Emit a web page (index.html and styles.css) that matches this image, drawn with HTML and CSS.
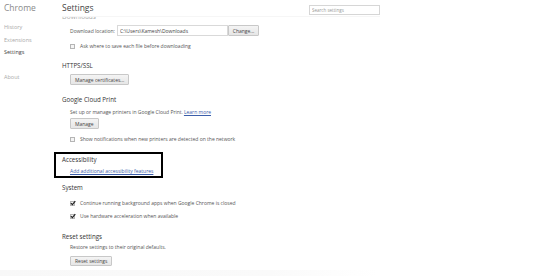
FILE: index.html
```html
<!DOCTYPE html>
<html>
<head>
    <title>Settings</title>
    <link rel="stylesheet" href="styles.css">
</head>
<body>
    <div class="page">
        <div class="sidebar">
            <div class="brand">Chrome</div>
            <ul class="nav">
                <li>History</li>
                <li>Extensions</li>
                <li class="selected">Settings</li>
                <li class="nav-about">About</li>
            </ul>
        </div>
        <div class="main">
            <div class="header">
                <h1>Settings</h1>
                <input type="text" class="search" placeholder="Search settings">
            </div>
            <div class="content">
                <div class="cut-title"><span>Downloads</span></div>
                <div class="row download-row">
                    <span class="label">Download location:</span>
                    <input type="text" class="path" value="C:\Users\Kamesh\Downloads">
                    <button>Change...</button>
                </div>
                <div class="row check-row">
                    <span class="box"></span>
                    <span>Ask where to save each file before downloading</span>
                </div>

                <h3 class="section-title https-title">HTTPS/SSL</h3>
                <div class="row btn-row">
                    <button>Manage certificates...</button>
                </div>

                <h3 class="section-title gcp-title">Google Cloud Print</h3>
                <div class="row text-row">
                    Set up or manage printers in Google Cloud Print. <a href="#">Learn more</a>
                </div>
                <div class="row btn-row manage-row">
                    <button>Manage</button>
                </div>
                <div class="row check-row notif-row">
                    <span class="box"></span>
                    <span>Show notifications when new printers are detected on the network</span>
                </div>

                <div class="highlight">
                    <h3 class="section-title">Accessibility</h3>
                    <div class="row text-row">
                        <a href="#">Add additional accessibility features</a>
                    </div>
                </div>

                <h3 class="section-title system-title">System</h3>
                <div class="row check-row sys-row">
                    <span class="box checked"><svg viewBox="0 0 10 10"><path d="M1.5 5.2 L4 7.8 L8.8 1.8" /></svg></span>
                    <span>Continue running background apps when Google Chrome is closed</span>
                </div>
                <div class="row check-row sys-row2">
                    <span class="box checked"><svg viewBox="0 0 10 10"><path d="M1.5 5.2 L4 7.8 L8.8 1.8" /></svg></span>
                    <span>Use hardware acceleration when available</span>
                </div>

                <h3 class="section-title reset-title">Reset settings</h3>
                <div class="row text-row restore-row">Restore settings to their original defaults.</div>
                <div class="row btn-row reset-btn-row">
                    <button>Reset settings</button>
                </div>
            </div>
        </div>
    </div>
    <div class="fade"></div>
</body>
</html>
```

FILE: styles.css
```css
body {
    margin: 0;
    font-family: "Open Sans", "Liberation Sans", sans-serif;
    background-color: #fff;
    color: #555;
    overflow: hidden;
}
.page {
    display: flex;
    height: 270px;
    overflow: hidden;
}
.fade {
    height: 6px;
    background: linear-gradient(90deg, #f8f8f8, #fafafa 50%, #fff 70%);
}
.sidebar {
    width: 50px;
    padding-left: 4px;
    flex-shrink: 0;
}
.brand {
    font-size: 8.5px;
    line-height: 16px;
    color: #8a8a8a;
}
.nav {
    list-style-type: none;
    margin: 5px 0 0 0;
    padding: 0;
    font-size: 5.5px;
    color: #aaa;
}
.nav li {
    height: 12.5px;
    line-height: 12.5px;
}
.nav .selected {
    color: #444;
}
.nav .nav-about {
    margin-top: 12px;
}
.main {
    flex: 1;
    padding-left: 8px;
}
.header {
    width: 318px;
    height: 16px;
    display: flex;
    justify-content: space-between;
    border-bottom: 1px solid #f6f6f6;
}
.header h1 {
    margin: 0;
    font-size: 8.5px;
    font-weight: normal;
    line-height: 16px;
    color: #444;
}
.search {
    margin-top: 5px;
    width: 71px;
    height: 10px;
    box-sizing: border-box;
    border: 1px solid #d6d6d6;
    padding: 0 2px;
    font-family: inherit;
    font-size: 4.5px;
    color: #555;
}
.search::placeholder {
    color: #999;
}
.cut-title {
    height: 3px;
    overflow: hidden;
    font-size: 6.5px;
    color: #aaa;
}
.cut-title span {
    display: block;
    height: 3px;
    line-height: 0;
}
.section-title {
    margin: 0;
    height: 10px;
    line-height: 10px;
    font-size: 6.2px;
    font-weight: normal;
    color: #333;
}
.row {
    margin-left: 8px;
    font-size: 5px;
    display: flex;
    align-items: center;
}
.download-row {
    margin-top: 5px;
    height: 11px;
}
.download-row .label {
    width: 47px;
}
.path {
    width: 111px;
    height: 11px;
    box-sizing: border-box;
    border: 1px solid #d9d9d9;
    padding: 0 2px;
    font-family: inherit;
    font-size: 5px;
    color: #444;
}
button {
    height: 11px;
    padding: 0 4px;
    border: 1px solid #c8c8c8;
    border-radius: 1px;
    background: linear-gradient(#f4f4f4, #e6e6e6);
    font-family: inherit;
    font-size: 5px;
    color: #444;
    cursor: pointer;
}
.download-row button {
    width: 31px;
    padding: 0;
}
.check-row {
    height: 10px;
    margin-top: 5px;
}
.box {
    width: 5px;
    height: 5px;
    box-sizing: border-box;
    border: 1px solid #b5b5b5;
    background-color: #f4f4f4;
    margin-right: 5px;
    position: relative;
}
.box.checked svg {
    position: absolute;
    left: -1px;
    top: -2px;
    width: 6px;
    height: 6px;
}
.box.checked path {
    fill: none;
    stroke: #222;
    stroke-width: 2;
}
.https-title {
    margin-top: 10px;
}
.btn-row {
    margin-top: 3px;
    height: 11px;
}
.gcp-title {
    margin-top: 10px;
}
.text-row {
    height: 10px;
    margin-top: 2px;
}
.text-row a {
    color: #3c5eaa;
    margin-left: 1px;
}
.manage-row {
    margin-top: 1px;
}
.notif-row {
    margin-top: 5px;
}
.highlight {
    margin: 8px 0 0 -8px;
    width: 109px;
    height: 26px;
    box-sizing: border-box;
    border: 2px solid #000;
    padding: 1px 0 0 6px;
}
.highlight .text-row {
    margin-top: 1px;
}
.highlight .text-row a {
    margin-left: 0;
}
.system-title {
    margin-top: 5px;
}
.sys-row {
    margin-top: 5px;
}
.sys-row2 {
    margin-top: 3px;
}
.reset-title {
    margin-top: 11px;
}
.restore-row {
    margin-top: 0;
}
.reset-btn-row {
    margin-top: 4px;
    height: 10px;
}
.reset-btn-row button {
    height: 10px;
}
```
